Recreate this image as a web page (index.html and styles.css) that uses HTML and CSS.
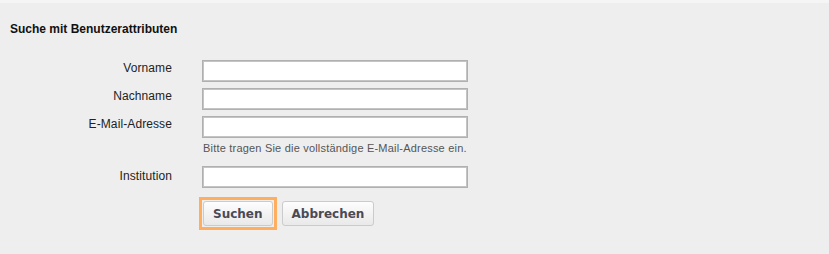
FILE: index.html
```html
<!DOCTYPE html>
<html lang="de">
<head>
<meta charset="utf-8">
<title>Suche mit Benutzerattributen</title>
<link rel="stylesheet" href="styles.css">
</head>
<body>
<div class="topstrip"></div>
<div class="panel">
  <h2 class="title">Suche mit Benutzerattributen</h2>
  <form class="form">
    <div class="row">
      <label class="label" for="vn">Vorname</label>
      <div class="field"><input class="input" id="vn" type="text"></div>
    </div>
    <div class="row">
      <label class="label" for="nn">Nachname</label>
      <div class="field"><input class="input" id="nn" type="text"></div>
    </div>
    <div class="row">
      <label class="label" for="em">E-Mail-Adresse</label>
      <div class="field">
        <input class="input" id="em" type="text">
        <div class="hint">Bitte tragen Sie die vollständige E-Mail-Adresse ein.</div>
      </div>
    </div>
    <div class="row row-inst">
      <label class="label" for="in">Institution</label>
      <div class="field"><input class="input" id="in" type="text"></div>
    </div>
    <div class="row row-buttons">
      <div class="label"></div>
      <div class="buttons">
        <span class="focusring"><button type="button" class="btn">Suchen</button></span>
        <button type="button" class="btn">Abbrechen</button>
      </div>
    </div>
  </form>
</div>
</body>
</html>
```

FILE: styles.css
```css
html, body {
  margin: 0;
  padding: 0;
  background: #eeeeee;
  font-family: "Liberation Sans", Arial, sans-serif;
  color: #222;
}

.topstrip {
  height: 3px;
  background: #f5f5f5;
}

.panel {
  padding: 19px 10px 0 10px;
}

.title {
  margin: 0;
  font-size: 12px;
  font-weight: bold;
  line-height: 14px;
  color: #111;
}

.form {
  margin-top: 24px;
  display: flex;
  flex-direction: column;
  gap: 6px;
}

.row {
  display: grid;
  grid-template-columns: 162px 266px;
  column-gap: 30px;
}

.label {
  text-align: right;
  font-size: 12px;
  line-height: 14px;
  padding-top: 1px;
  letter-spacing: 0.1px;
  color: #222;
}

.row-inst {
  margin-top: 5px;
}

.row-inst .label {
  padding-top: 3px;
}

.field {
  display: flex;
  flex-direction: column;
}

.input {
  box-sizing: border-box;
  width: 266px;
  height: 22px;
  margin: 0;
  border: 1px solid #b0b0b0;
  box-shadow: inset 0 0 0 1px #c4c4c4;
  background: #fff;
  padding: 0 4px;
}

.hint {
  margin-top: 4px;
  font-size: 11px;
  line-height: 13px;
  letter-spacing: 0.2px;
  color: #555;
  padding-left: 1px;
  white-space: nowrap;
}

.row-buttons {
  margin-top: 3px;
}

.buttons {
  display: flex;
  align-items: center;
  margin-left: -3px;
  gap: 5px;
}

.focusring {
  display: inline-flex;
  border: 3px solid #ffad5e;
  padding: 1px;
}

.btn {
  box-sizing: border-box;
  height: 25px;
  padding: 0 9px;
  margin: 0;
  border: 1px solid #cbcbcb;
  border-radius: 3px;
  background: linear-gradient(#fdfdfd, #e9e9e9);
  font-family: "DejaVu Sans", Verdana, sans-serif;
  font-weight: bold;
  font-size: 12px;
  color: #4a4a55;
  cursor: pointer;
}
```
